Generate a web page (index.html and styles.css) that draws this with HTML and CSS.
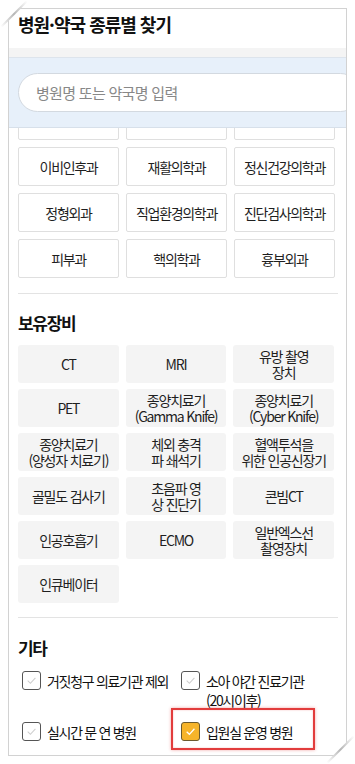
FILE: index.html
```html
<!DOCTYPE html>
<html lang="ko">
<head>
<meta charset="utf-8">
<title>병원·약국 종류별 찾기</title>
<link rel="stylesheet" href="styles.css">
</head>
<body>
<div class="panel">
  <div class="header">병원·약국 종류별 찾기</div>
  <div class="strip"></div>
  <div class="search-area">
    <div class="search-box"><span class="placeholder">병원명 또는 약국명 입력</span></div>
  </div>
  <div class="dept-scroll">
    <div class="dept-grid">
      <div class="dept-btn"></div>
      <div class="dept-btn"></div>
      <div class="dept-btn"></div>
      <div class="dept-btn">이비인후과</div>
      <div class="dept-btn">재활의학과</div>
      <div class="dept-btn">정신건강의학과</div>
      <div class="dept-btn">정형외과</div>
      <div class="dept-btn">직업환경의학과</div>
      <div class="dept-btn">진단검사의학과</div>
      <div class="dept-btn">피부과</div>
      <div class="dept-btn">핵의학과</div>
      <div class="dept-btn">흉부외과</div>
    </div>
  </div>
  <div class="section equip">
    <h2 class="sec-title">보유장비</h2>
    <div class="equip-grid">
      <div class="eq-btn">CT</div>
      <div class="eq-btn">MRI</div>
      <div class="eq-btn">유방 촬영<br>장치</div>
      <div class="eq-btn">PET</div>
      <div class="eq-btn">종양치료기<br>(Gamma Knife)</div>
      <div class="eq-btn">종양치료기<br>(Cyber Knife)</div>
      <div class="eq-btn">종양치료기<br>(양성자 치료기)</div>
      <div class="eq-btn">체외 충격<br>파 쇄석기</div>
      <div class="eq-btn">혈액투석을<br>위한 인공신장기</div>
      <div class="eq-btn">골밀도 검사기</div>
      <div class="eq-btn">초음파 영<br>상 진단기</div>
      <div class="eq-btn">콘빔CT</div>
      <div class="eq-btn">인공호흡기</div>
      <div class="eq-btn">ECMO</div>
      <div class="eq-btn">일반엑스선<br>촬영장치</div>
      <div class="eq-btn">인큐베이터</div>
    </div>
  </div>
  <div class="section etc">
    <h2 class="sec-title">기타</h2>
    <div class="check-grid">
      <label class="check-item">
        <span class="box"><svg viewBox="0 0 20 20" width="19" height="19"><path d="M5.5 10.2 L8.7 13.3 L14.6 6.8" fill="none" stroke="#cfcfcf" stroke-width="1.3"/></svg></span>
        <span class="check-label">거짓청구 의료기관 제외</span>
      </label>
      <label class="check-item">
        <span class="box"><svg viewBox="0 0 20 20" width="19" height="19"><path d="M5.5 10.2 L8.7 13.3 L14.6 6.8" fill="none" stroke="#cfcfcf" stroke-width="1.3"/></svg></span>
        <span class="check-label">소아 야간 진료기관 (20시이후)</span>
      </label>
      <label class="check-item">
        <span class="box"><svg viewBox="0 0 20 20" width="19" height="19"><path d="M5.5 10.2 L8.7 13.3 L14.6 6.8" fill="none" stroke="#cfcfcf" stroke-width="1.3"/></svg></span>
        <span class="check-label">실시간 문 연 병원</span>
      </label>
      <label class="check-item">
        <span class="box checked"><svg viewBox="0 0 20 20" width="19" height="19"><path d="M5.5 10.2 L8.7 13.3 L14.6 6.8" fill="none" stroke="#ffffff" stroke-width="1.5"/></svg></span>
        <span class="check-label">입원실 운영 병원</span>
      </label>
    </div>
  </div>
</div>
<div class="highlight"></div>
<svg class="curl curl-tl" width="32" height="32" viewBox="0 0 32 32">
  <defs>
    <linearGradient id="gtl" x1="0" y1="1" x2="1" y2="0">
      <stop offset="0" stop-color="#ffffff"/>
      <stop offset="0.5" stop-color="#b5b5b5"/>
      <stop offset="1" stop-color="#ffffff"/>
    </linearGradient>
  </defs>
  <polygon points="0,0 28,0 0,28" fill="#ffffff"/>
  <line x1="1" y1="27" x2="27" y2="1" stroke="url(#gtl)" stroke-width="2"/>
</svg>
<svg class="curl curl-br" width="36" height="36" viewBox="0 0 36 36">
  <defs>
    <linearGradient id="gbr" x1="0" y1="1" x2="1" y2="0">
      <stop offset="0" stop-color="#ffffff"/>
      <stop offset="0.5" stop-color="#b5b5b5"/>
      <stop offset="1" stop-color="#ffffff"/>
    </linearGradient>
  </defs>
  <polygon points="36,7 36,36 7,36" fill="#ffffff"/>
  <line x1="8" y1="35" x2="35" y2="8" stroke="url(#gbr)" stroke-width="2"/>
</svg>
</body>
</html>
```

FILE: styles.css
```css
* { box-sizing: border-box; }
html, body {
  margin: 0;
  padding: 0;
  background: #ffffff;
}
body {
  font-family: "Noto Sans CJK KR", "Noto Sans", sans-serif;
  color: #222;
  position: relative;
  width: 355px;
  height: 764px;
  overflow: hidden;
}
.panel {
  margin: 8px 0 0 8px;
  width: 339px;
  border: 1px solid #d2d2d2;
  background: #fff;
  overflow: hidden;
}
.header {
  height: 39px;
  line-height: 30px;
  padding-left: 9px;
  font-size: 18px;
  font-weight: 700;
  letter-spacing: -1px;
  color: #111;
}
.strip {
  height: 10px;
  background: #f4f4f4;
  border-bottom: 1px solid #dde4ec;
}
.search-area {
  background: #e7f0fa;
  padding: 15px 0 15px 9px;
  border-bottom: 1px solid #d7e0ea;
}
.search-box {
  height: 39px;
  margin-right: -14px;
  background: #fff;
  border: 1px solid #d3d9e0;
  border-radius: 20px;
  padding-left: 17px;
  display: flex;
  align-items: center;
}
.placeholder {
  font-size: 15px;
  letter-spacing: -0.7px;
  color: #888;
}
.dept-scroll {
  overflow: hidden;
  padding: 0 11px 15px 9px;
}
.dept-grid {
  margin-top: -27px;
  display: grid;
  grid-template-columns: repeat(3, 1fr);
  gap: 7px;
}
.dept-btn {
  height: 39px;
  border: 1px solid #dfdfdf;
  border-radius: 2px;
  background: #fff;
  display: flex;
  align-items: center;
  justify-content: center;
  font-size: 14px;
  letter-spacing: -1.3px;
  color: #1f1f1f;
  white-space: nowrap;
}
.section {
  margin: 0 8px 0 9px;
  border-top: 1px solid #e3e3e3;
}
.equip {
  padding: 17px 0 14px;
}
.sec-title {
  margin: 0 0 10px;
  font-size: 17px;
  line-height: 24px;
  font-weight: 700;
  letter-spacing: -1.3px;
  color: #111;
}
.equip-grid {
  width: 316px;
  display: grid;
  grid-template-columns: repeat(3, 1fr);
  gap: 6px 7px;
}
.eq-btn {
  height: 38px;
  background: #f4f4f4;
  border-radius: 3px;
  display: flex;
  align-items: center;
  justify-content: center;
  text-align: center;
  font-size: 14px;
  line-height: 16px;
  letter-spacing: -1.2px;
  color: #1f1f1f;
  white-space: nowrap;
}
.etc {
  padding: 18px 0 13px;
}
.etc .sec-title {
  margin-bottom: 11px;
}
.check-grid {
  display: grid;
  grid-template-columns: 159px 1fr;
  row-gap: 12px;
}
.check-item {
  display: flex;
  align-items: flex-start;
  gap: 6px;
  padding-left: 4px;
}
.box {
  flex: none;
  width: 19px;
  height: 19px;
  border: 1px solid #555;
  border-radius: 3px;
  background: #fff;
  display: flex;
  align-items: center;
  justify-content: center;
}
.box svg { display: block; width: 17px; height: 17px; }
.box.checked {
  background: #f6b42a;
  border-color: #6b5a2e;
}
.check-label {
  font-size: 14px;
  line-height: 19px;
  letter-spacing: -1.3px;
  color: #111;
  padding-top: 1px;
  word-break: keep-all;
}
.highlight {
  position: absolute;
  left: 171px;
  top: 708px;
  width: 144px;
  height: 42px;
  border: 2px solid #e23c3c;
  box-shadow: 0 0 3px rgba(226, 60, 60, 0.45), inset 0 0 2px rgba(226, 60, 60, 0.35);
}
.curl {
  position: absolute;
  display: block;
}
.curl-tl { left: 0; top: 0; }
.curl-br { left: 319px; top: 728px; }
```
